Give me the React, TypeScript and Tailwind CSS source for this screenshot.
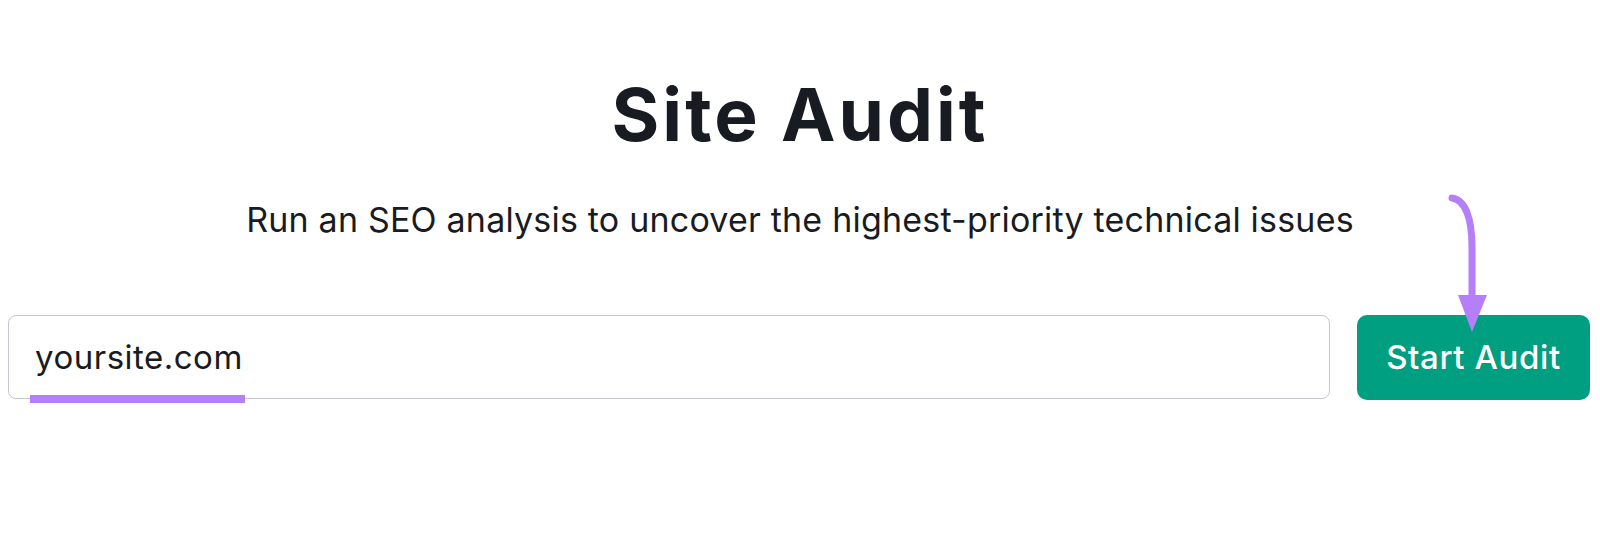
import React from "react";

export default function App() {
  return (
    <div className="relative w-[1600px] h-[538px] bg-white font-['Inter',sans-serif] text-[#191b23] overflow-hidden">
      <h1 className="pt-[78px] text-center text-[73px] leading-none font-bold tracking-[3px]">
        Site Audit
      </h1>
      <p className="mt-[52px] text-center text-[34px] leading-none font-normal tracking-[0.2px]">
        Run an SEO analysis to uncover the highest-priority technical issues
      </p>
      <div className="mt-[78px] flex gap-[27px] pl-[8px] pr-[10px]">
        <div className="relative flex h-[84px] flex-1 items-center rounded-[8px] border border-[#c4c7cf] pl-[26px]">
          <span className="text-[33px] leading-none tracking-[0.5px] text-[#191b23]">yoursite.com</span>
          <div className="absolute left-[21px] top-[79px] h-[8px] w-[215px] bg-[#b57ffa]" />
        </div>
        <div className="flex h-[85px] w-[233px] items-center justify-center rounded-[10px] bg-[#009f81]">
          <span className="text-[33px] leading-none font-medium tracking-[0.6px] text-white">Start Audit</span>
        </div>
      </div>
      <svg
        className="absolute left-[1440px] top-[185px]"
        width="60"
        height="160"
        viewBox="0 0 60 160"
      >
        <path
          d="M12 13 C 26 15, 32 35, 32 62 L 32 112"
          fill="none"
          stroke="#b57ffa"
          strokeWidth="7"
          strokeLinecap="round"
        />
        <polygon points="18,110 47,110 32,147" fill="#b57ffa" />
      </svg>
    </div>
  );
}
